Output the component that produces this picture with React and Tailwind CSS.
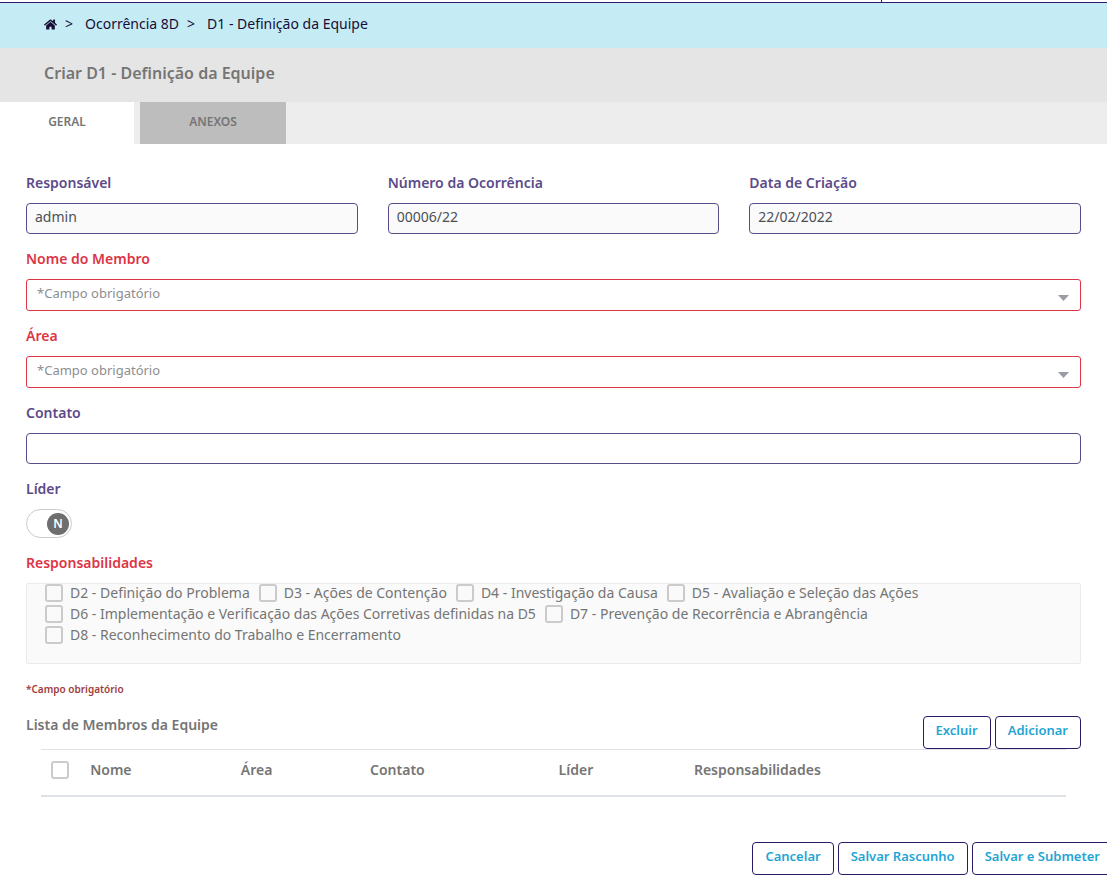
import { useState } from "react";
import { FaHome } from "react-icons/fa";

const RESPONSIBILITIES = [
  "D2 - Definição do Problema",
  "D3 - Ações de Contenção",
  "D4 - Investigação da Causa",
  "D5 - Avaliação e Seleção das Ações",
  "D6 - Implementação e Verificação das Ações Corretivas definidas na D5",
  "D7 - Prevenção de Recorrência e Abrangência",
  "D8 - Reconhecimento do Trabalho e Encerramento",
];

const CHECKBOX =
  "size-[18px] shrink-0 appearance-none rounded-[3px] border-2 border-[#cbcbcb] checked:bg-[#5c4b8a]";

function TextField({ id, label, ...props }) {
  return (
    <div className="flex min-w-0 flex-col gap-[10px]">
      <label htmlFor={id} className="text-sm font-semibold text-[#5c4b8a]">
        {label}
      </label>
      <input
        id={id}
        type="text"
        className="h-[31px] w-full rounded-[4px] border border-[#5c4b8a] bg-white px-2 pb-[5px] text-sm text-[#495057] read-only:bg-[#fafafa]"
        {...props}
      />
    </div>
  );
}

function RequiredSelect({ id, label }) {
  return (
    <div className="flex flex-col gap-[10px]">
      <label htmlFor={id} className="text-sm font-semibold text-[#dc3545]">
        {label}
      </label>
      <div className="relative">
        <select
          id={id}
          required
          className="block h-8 w-full appearance-none rounded-[3px] border border-[#dc3545] bg-white px-[10px] pb-[3px] text-[13px] text-[#8e8e8e]"
        >
          <option value="">*Campo obrigatório</option>
        </select>
        <svg
          viewBox="0 0 11 6"
          className="pointer-events-none absolute right-3 top-4 h-[6px] w-[11px] fill-[#999da3]"
        >
          <path d="M0 0h11L5.5 6z" />
        </svg>
      </div>
    </div>
  );
}

function ActionButton({ children }) {
  return (
    <button
      type="button"
      className="h-[33px] shrink-0 whitespace-nowrap rounded-[4px] border border-[#2c1a67] bg-white px-3 pb-[3px] text-[13px] font-semibold text-[#1fa5d4]"
    >
      {children}
    </button>
  );
}

export default function App() {
  const [leader, setLeader] = useState(false);

  return (
    <div className="min-h-screen overflow-x-hidden bg-white font-['Noto_Sans','Open_Sans',sans-serif] text-[#757575]">
      <div className="flex h-[3px] border-b border-[#2f1b6e]">
        <div className="w-[882px] border-r border-[#2f1b6e]" />
      </div>

      <nav className="flex h-[45px] items-center bg-[#c5ebf4] px-11 pb-[3px] text-sm text-[#170e36]">
        <a href="#inicio" aria-label="Início">
          <FaHome className="size-[13px]" />
        </a>
        <span className="ml-2">&gt;</span>
        <a href="#ocorrencia" className="ml-3">
          Ocorrência 8D
        </a>
        <span className="ml-2">&gt;</span>
        <a href="#d1" className="ml-3">
          D1 - Definição da Equipe
        </a>
      </nav>

      <header className="flex h-[54px] items-center bg-[#e5e5e5] px-11 pb-1">
        <h1 className="text-base font-semibold">Criar D1 - Definição da Equipe</h1>
      </header>

      <div role="tablist" className="flex h-[42px] gap-[6px] bg-[#ededed] text-xs font-semibold">
        <button role="tab" aria-selected="true" type="button" className="w-[134px] bg-white pb-[3px]">
          GERAL
        </button>
        <button role="tab" aria-selected="false" type="button" className="w-[146px] bg-[#bdbdbd] pb-[3px]">
          ANEXOS
        </button>
      </div>

      <main className="px-[26px] pt-[29px]">
        <form className="flex flex-col gap-[15px]">
          <div className="grid grid-cols-3 gap-[30px]">
            <TextField id="responsavel" label="Responsável" defaultValue="admin" readOnly />
            <TextField id="numero" label="Número da Ocorrência" defaultValue="00006/22" readOnly />
            <TextField id="data" label="Data de Criação" defaultValue="22/02/2022" readOnly />
          </div>
          <RequiredSelect id="membro" label="Nome do Membro" />
          <RequiredSelect id="area" label="Área" />
          <TextField id="contato" label="Contato" />

          <div className="flex flex-col items-start gap-[10px]">
            <label htmlFor="lider" className="text-sm font-semibold text-[#5c4b8a]">
              Líder
            </label>
            <button
              id="lider"
              type="button"
              role="switch"
              aria-checked={leader}
              onClick={() => setLeader(!leader)}
              className={
                "flex h-[29px] w-[46px] items-center rounded-full border border-[#cbcbcb] bg-white px-[2px] " +
                (leader ? "justify-start" : "justify-end")
              }
            >
              <span className="flex size-[22px] items-center justify-center rounded-full bg-[#6e6e6e] text-xs font-semibold text-white">
                {leader ? "S" : "N"}
              </span>
            </button>
          </div>

          <fieldset>
            <legend className="mb-[10px] text-sm font-semibold text-[#dc3545]">Responsabilidades</legend>
            <div className="flex min-h-[81px] flex-wrap content-start items-center gap-x-[9px] rounded-[2px] border border-[#ebebeb] bg-[#fafafa] px-[18px]">
              {RESPONSIBILITIES.map((text) => (
                <label key={text} className="flex h-[21px] items-start gap-[7px] text-sm leading-[18px]">
                  <input type="checkbox" className={CHECKBOX} />
                  {text}
                </label>
              ))}
            </div>
          </fieldset>
        </form>

        <p className="mt-[17px] text-[10px] font-semibold leading-4 text-[#a03c3c]">*Campo obrigatório</p>

        <section className="mt-[19px]">
          <div className="flex items-start justify-between">
            <h2 className="text-sm font-semibold leading-[18px]">Lista de Membros da Equipe</h2>
            <div className="flex gap-1">
              <ActionButton>Excluir</ActionButton>
              <ActionButton>Adicionar</ActionButton>
            </div>
          </div>
          <div className="px-[15px]">
            <table className="w-full table-fixed border-t border-b-2 border-[#dee2e6] text-left text-sm">
              <thead>
                <tr className="h-[46px]">
                  <th className="w-[4.8%] pb-1 pl-[10px] align-middle">
                    <input type="checkbox" aria-label="Selecionar todos" className={CHECKBOX + " block"} />
                  </th>
                  <th className="w-[14.7%] pb-1 font-semibold">Nome</th>
                  <th className="w-[12.6%] pb-1 font-semibold">Área</th>
                  <th className="w-[18.4%] pb-1 font-semibold">Contato</th>
                  <th className="w-[13.2%] pb-1 font-semibold">Líder</th>
                  <th className="pb-1 font-semibold">Responsabilidades</th>
                </tr>
              </thead>
            </table>
          </div>
        </section>
      </main>

      <footer className="-mr-[6px] mt-[45px] flex justify-end gap-1">
        <ActionButton>Cancelar</ActionButton>
        <ActionButton>Salvar Rascunho</ActionButton>
        <ActionButton>Salvar e Submeter</ActionButton>
      </footer>
    </div>
  );
}
